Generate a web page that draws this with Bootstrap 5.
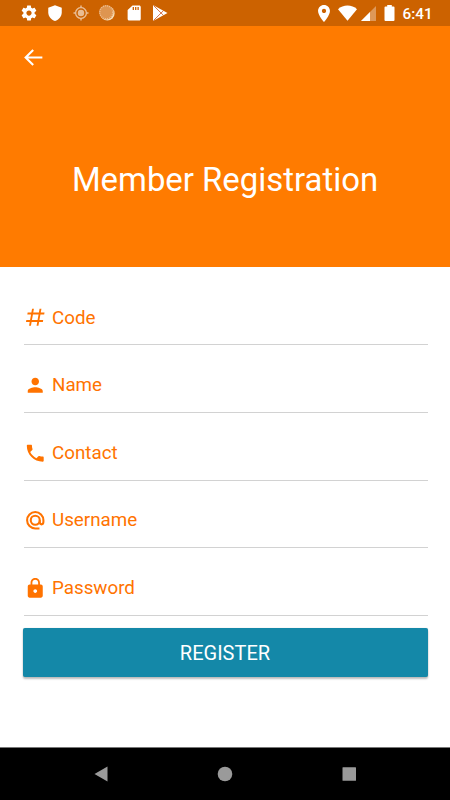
<!DOCTYPE html>
<html lang="en">
<head>
<meta charset="utf-8">
<meta name="viewport" content="width=device-width, initial-scale=1">
<title>Member Registration</title>
<link href="https://cdn.jsdelivr.net/npm/bootstrap@5.3.0/dist/css/bootstrap.min.css" rel="stylesheet">
<style>
body { font-family: Roboto, "Liberation Sans", sans-serif; background: #fff; overflow: hidden; }
svg { display: block; flex: none; }
.screen { height: 800px; }
.status-bar { height: 26px; background: #cc6200; padding: 0 18px 0 19.5px; }
.status-left { gap: 8.3px; }
.clock { font-size: 15.3px; font-weight: 500; line-height: 26px; width: 29.5px; margin-left: 8px; padding-top: 1px; white-space: nowrap; }
.hero { height: 241px; background: #ff7b00; }
.back { padding: 19px 0 0 21px; height: 62px; }
.hero-title { font-size: 32.9px; font-weight: 400; line-height: 40px; margin-top: 71.5px; white-space: nowrap; }
.form-area { padding: 10.8px 22.5px 0; }
.field { height: 67.6px; margin: 0 0 0 1.5px; padding-top: 13px; border-bottom: 1px solid #d2d2d2; color: #ff7300; font-size: 18.8px; line-height: 24px; gap: 5.5px; }
.btn-register { height: 49px; margin-top: 12.2px; background: #1488a8; color: #fff; border: 0; border-radius: 2px; font-size: 20px; line-height: 24px; box-shadow: 0 2px 2px rgba(0,0,0,.25), 0 0 1px rgba(0,0,0,.25); }
.btn-register span { padding-top: 2px; }
.nav-keys { height: 53px; background: #000; border-top: 1px solid #777; }
</style>
<script src="https://cdn.jsdelivr.net/npm/bootstrap@5.3.0/dist/js/bootstrap.bundle.min.js"></script>
</head>
<body>
<div class="screen d-flex flex-column">
  <div class="status-bar d-flex align-items-center justify-content-between text-white">
    <div class="status-left d-flex align-items-center">
      <svg width="18" height="18" viewBox="0 0 24 24" fill="#fff"><path d="M19.43 12.98c.04-.32.07-.64.07-.98s-.03-.66-.07-.98l2.11-1.65c.19-.15.24-.42.12-.64l-2-3.46c-.12-.22-.39-.3-.61-.22l-2.49 1c-.52-.4-1.08-.73-1.69-.98l-.38-2.65C14.46 2.18 14.25 2 14 2h-4c-.25 0-.46.18-.49.42l-.38 2.65c-.61.25-1.17.59-1.69.98l-2.49-1c-.23-.09-.49 0-.61.22l-2 3.46c-.13.22-.07.49.12.64l2.11 1.65c-.04.32-.07.65-.07.98s.03.66.07.98l-2.11 1.65c-.19.15-.24.42-.12.64l2 3.46c.12.22.39.3.61.22l2.49-1c.52.4 1.08.73 1.69.98l.38 2.65c.03.24.24.42.49.42h4c.25 0 .46-.18.49-.42l.38-2.65c.61-.25 1.17-.59 1.69-.98l2.49 1c.23.09.49 0 .61-.22l2-3.46c.12-.22.07-.49-.12-.64l-2.11-1.65zM12 15.5c-1.93 0-3.5-1.57-3.5-3.5s1.57-3.5 3.5-3.5 3.5 1.57 3.5 3.5-1.57 3.5-3.5 3.5z"/></svg>
      <svg width="18" height="18" viewBox="0 0 24 24" fill="#fff"><path d="M12 1.500L3 5v6c0 5.550 3.840 10.200 9 11.500 5.160-1.300 9-5.950 9-11.500V5l-9-3.500z"/></svg>
      <svg width="18" height="18" viewBox="0 0 24 24" fill="#fff" opacity=".58"><circle cx="12" cy="12" r="4.300"/><path d="M20 11C19.500 7.300 16.700 4.500 13 4V2H11V4C7.300 4.500 4.500 7.300 4 11H2V13H4C4.500 16.700 7.300 19.500 11 20V22H13V20C16.700 19.500 19.500 16.700 20 13H22V11ZM12 18.300A6.300 6.300 0 1 1 12 5.700A6.300 6.300 0 0 1 12 18.300Z"/></svg>
      <svg width="18" height="18" viewBox="0 0 18 18"><circle cx="9.400" cy="9.400" r="7.200" fill="#f7dfb8"/><circle cx="8.300" cy="8.300" r="7.200" fill="#de9550"/><circle cx="8.300" cy="8.300" r="6.500" fill="none" stroke="#eebf92" stroke-width="1.300" stroke-dasharray="1 1.040"/></svg>
      <svg width="18" height="18" viewBox="0 0 24 24" fill="#fff"><path d="M18 2h-8L3.500 8v12c0 1.100.9 2 2 2H19c1.100 0 2-.9 2-2V4c0-1.100-.9-2-2-2zM12 8h-1.800V4H12zm3.200 0h-1.800V4h1.800zm3.200 0h-1.800V4h1.800z" fill-rule="evenodd"/></svg>
      <svg width="18" height="18" viewBox="0 0 18 18"><path d="M2 1V17L16.500 9Z" fill="#fff"/><path d="M2.500 1.500L12.500 11.400M2.500 16.500L12.500 6.600" stroke="#c8501c" stroke-width=".8"/></svg>
    </div>
    <div class="d-flex align-items-center">
      <svg width="12" height="17" viewBox="5 2 14 20" fill="#fff"><path d="M12 2C8.130 2 5 5.130 5 9c0 5.250 7 13 7 13s7-7.750 7-13c0-3.870-3.130-7-7-7zm0 9.500c-1.380 0-2.500-1.120-2.500-2.500s1.120-2.500 2.500-2.500 2.500 1.120 2.500 2.500-1.120 2.500-2.500 2.500z"/></svg>
      <svg class="ms-2" width="19" height="16" viewBox="0 0 19 16" fill="#fff"><path d="M0 4.200C5 -.8 14 -.8 19 4.200L9.500 15.700Z"/></svg>
      <svg class="ms-1" width="15" height="15" viewBox="0 0 15 15" fill="#fff"><path d="M15 0V15H0Z" opacity=".35"/><path d="M9 6V15H0Z"/></svg>
      <svg class="ms-2" width="11" height="16" viewBox="0 0 11 16" fill="#fff"><path d="M3.200 0H7.800V1.500H9.500Q10.500 1.500 10.500 2.500V15Q10.500 16 9.500 16H1.500Q.5 16 .5 15V2.500Q.5 1.500 1.500 1.500H3.200Z"/></svg>
      <span class="clock">6:41</span>
    </div>
  </div>

  <header class="hero text-white">
    <div class="back">
      <svg width="25" height="25" viewBox="0 0 24 24" fill="#fff"><path d="M20.500 11H6.830l5.590-5.590L11 4l-8 8 8 8 1.410-1.410L6.830 13H20.500v-2z"/></svg>
    </div>
    <h1 class="hero-title text-center mb-0">Member Registration</h1>
  </header>

  <main class="form-area flex-grow-1">
    <div class="field d-flex align-items-center">
      <svg width="22.500" height="22.500" viewBox="0 0 24 24" fill="currentColor"><path d="M5.410 21L6.120 17H2.120L2.470 15H6.470L7.530 9H3.530L3.880 7H7.880L8.590 3H10.590L9.880 7H15.880L16.590 3H18.590L17.880 7H21.880L21.530 9H17.530L16.470 15H20.470L20.120 17H16.120L15.410 21H13.410L14.120 17H8.120L7.410 21H5.410M9.530 9L8.470 15H14.470L15.530 9H9.530Z"/></svg>
      <span>Code</span>
    </div>
    <div class="field d-flex align-items-center">
      <svg width="22.500" height="22.500" viewBox="0 0 24 24" fill="currentColor"><path d="M12 12c2.210 0 4-1.790 4-4s-1.790-4-4-4-4 1.790-4 4 1.790 4 4 4zm0 2c-2.670 0-8 1.340-8 4v2h16v-2c0-2.660-5.330-4-8-4z"/></svg>
      <span>Name</span>
    </div>
    <div class="field d-flex align-items-center">
      <svg width="22.500" height="22.500" viewBox="0 0 24 24" fill="currentColor"><path d="M6.620 10.790c1.440 2.830 3.760 5.140 6.590 6.590l2.200-2.200c.27-.27.67-.36 1.020-.24 1.120.37 2.330.57 3.570.57.55 0 1 .45 1 1V20c0 .55-.45 1-1 1-9.390 0-17-7.610-17-17 0-.55.45-1 1-1h3.500c.55 0 1 .45 1 1 0 1.250.2 2.450.57 3.570.11.35.03.74-.25 1.020l-2.200 2.200z"/></svg>
      <span>Contact</span>
    </div>
    <div class="field d-flex align-items-center">
      <svg width="22.500" height="22.500" viewBox="0 0 24 24" fill="none" stroke="currentColor" stroke-width="2.200"><circle cx="12" cy="12" r="4.800"/><path d="M16.500 20.700H12A8.700 8.700 0 1 1 20.700 12V13.700C20.700 17.300 16.800 17.300 16.800 13.700V12"/></svg>
      <span>Username</span>
    </div>
    <div class="field d-flex align-items-center">
      <svg width="22.500" height="22.500" viewBox="0 0 24 24" fill="currentColor"><path d="M18 8h-1V6c0-2.760-2.240-5-5-5S7 3.240 7 6v2H6c-1.100 0-2 .9-2 2v10c0 1.100.9 2 2 2h12c1.100 0 2-.9 2-2V10c0-1.100-.9-2-2-2zm-6 9c-1.100 0-2-.9-2-2s.9-2 2-2 2 .9 2 2-.9 2-2 2zm3.100-9H8.900V6c0-1.710 1.390-3.100 3.100-3.100 1.710 0 3.100 1.390 3.100 3.100v2z"/></svg>
      <span>Password</span>
    </div>
    <button type="button" class="btn btn-register w-100 d-flex align-items-center justify-content-center p-0"><span>REGISTER</span></button>
  </main>

  <footer class="nav-keys d-flex align-items-center justify-content-center">
    <svg width="264" height="18" viewBox="0 0 264 18" fill="#9a9a9a"><path d="M14.500 1.500V16.500L1.500 9Z"/><circle cx="132" cy="9" r="7.300"/><rect x="249.500" y="2.200" width="13.500" height="13.500" rx=".5"/></svg>
  </footer>
</div>
</body>
</html>
